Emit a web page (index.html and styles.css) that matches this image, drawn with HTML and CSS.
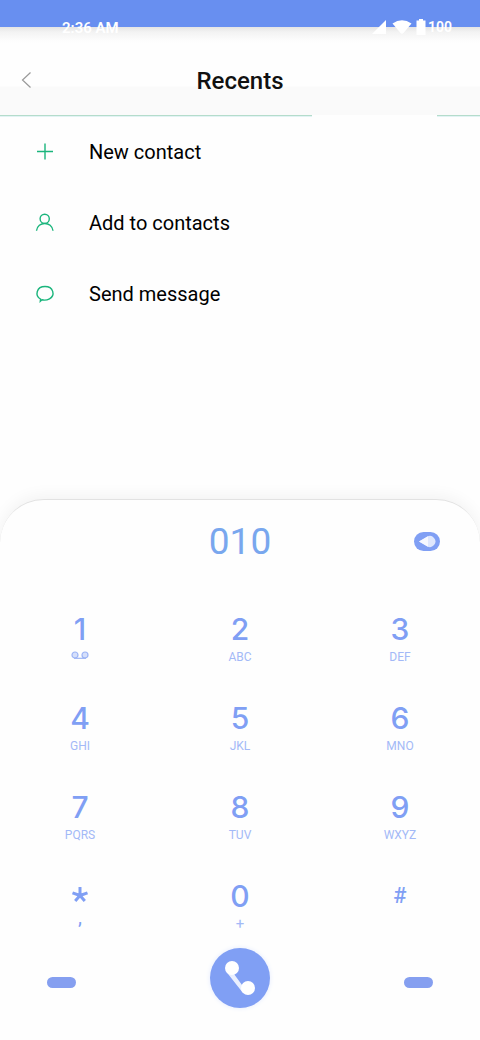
FILE: index.html
```html
<!DOCTYPE html>
<html lang="en">
<head>
<meta charset="utf-8">
<meta name="viewport" content="width=device-width, initial-scale=1">
<title>Recents</title>
<link rel="stylesheet" href="styles.css">
</head>
<body>
<div class="phone">
  <div class="status">
    <span class="time">2:36 AM</span>
    <span class="indicators">
      <svg class="signal" width="16" height="15" viewBox="0 0 16 15"><path d="M16 0v14H2z"/></svg>
      <svg class="wifi" width="20" height="16" viewBox="0 0 20 16"><path d="M.5 4.500Q10-2 19.500 4.500L11.500 14Q10 15.500 8.500 14z"/></svg>
      <svg class="battery" width="10" height="17" viewBox="0 0 10 17"><path d="M3 0h4v1.500h2.500V16h-9V1.500H3z"/></svg>
      <span class="level">100</span>
    </span>
  </div>
  <header class="header">
    <button class="back" aria-label="Back"><svg width="12" height="18" viewBox="0 0 12 18"><path d="M10.500 1.500L2.500 9l8 7.500"/></svg></button>
    <h1>Recents</h1>
  </header>
  <div class="rule"><span class="rule-long"></span><span class="rule-short"></span></div>
  <nav class="actions">
    <button><svg width="20" height="20" viewBox="0 0 20 20"><path d="M10 1.500v16M2 9.500h16"/></svg><span>New contact</span></button>
    <button><svg width="20" height="20" viewBox="0 0 20 20"><circle cx="9.700" cy="5.800" r="4.600"/><path d="M1.500 17.800c1-9.800 15.500-9.800 16.500 0"/></svg><span>Add to contacts</span></button>
    <button><svg width="20" height="20" viewBox="0 0 20 20"><path d="M5.500 15C-.5 11.500 1.500 2.500 10 2.500s10.500 9 4.500 12.300c-2.500 1.400-5.500 1.500-7.500 1L5.300 17.300z"/></svg><span>Send message</span></button>
  </nav>
  <main class="dialer">
    <div class="display">
      <output class="number">010</output>
      <button class="erase" aria-label="Delete digit"><svg width="26" height="19" viewBox="0 0 26 19"><rect width="26" height="19" rx="9.500" fill="#809ff4"/><path d="M5 9.500L13 4.800a5.500 5.500 0 1 1 0 9.400z" fill="#dfe7fd"/><path d="M5 9.500L14 4.300v10.400z" fill="#f6f8ff"/></svg></button>
    </div>
    <div class="keys">
      <button><b>1</b><svg width="18" height="9" viewBox="0 0 18 9"><g fill="#d5dffb" stroke="#9cb4f5" stroke-width="1.200"><circle cx="4" cy="4" r="3"/><circle cx="14" cy="4" r="3"/><path d="M3 7.300h12"/></g></svg></button>
      <button><b>2</b><small>ABC</small></button>
      <button><b>3</b><small>DEF</small></button>
      <button><b>4</b><small>GHI</small></button>
      <button><b>5</b><small>JKL</small></button>
      <button><b>6</b><small>MNO</small></button>
      <button><b>7</b><small>PQRS</small></button>
      <button><b>8</b><small>TUV</small></button>
      <button><b>9</b><small>WXYZ</small></button>
      <button aria-label="Star"><svg class="star" width="18" height="30" viewBox="0 0 18 30"><path d="M9 14.500V6M9 14.500l-7.500-2.700M9 14.500l7.500-2.700M9 14.500l-4.800 5.500M9 14.500l4.800 5.500"/></svg><small class="comma">,</small></button>
      <button><b>0</b><small class="plus">+</small></button>
      <button><b class="hash">#</b></button>
    </div>
    <div class="bottom">
      <button class="pill" aria-label="Menu"></button>
      <button class="call" aria-label="Call"><svg width="60" height="60" viewBox="0 0 60 60"><path d="M16.500 24L33 45l5-5-6-3-8-11z" fill="#e9effe"/><circle cx="22" cy="20" r="7"/><circle cx="38" cy="40" r="7"/></svg></button>
      <button class="pill" aria-label="Hide keypad"></button>
    </div>
  </main>
</div>
</body>
</html>
```
FILE: styles.css
```css
* { box-sizing: border-box; }
body { margin: 0; background: #fefefe; font-family: Roboto, sans-serif; }
button { border: 0; padding: 0; background: none; font-family: inherit; color: inherit; }
svg { display: block; }
.phone { min-height: 100vh; display: flex; flex-direction: column; }
.status {
  height: 44px; padding: 18px 28px 0 62px;
  display: flex; justify-content: space-between; align-items: flex-start;
  background: linear-gradient(#688ff0 27px, #e4e4e4 27px, #f3f3f3 32px, #fcfcfc 40px, #fefefe);
  color: #fff; font-size: 15px; line-height: 20px; font-weight: 600;
}
.indicators { display: flex; align-items: flex-start; gap: 4px; fill: #fff; }
.signal { margin: 2px 2px 0 0; }
.wifi { margin-top: 1px; }
.battery { margin-top: 1px; }
.level { font-size: 14px; line-height: 18px; font-weight: 600; margin-left: -2px; }
.header {
  height: 71px; padding: 0 20px;
  display: grid; grid-template-columns: 40px 1fr 40px; align-items: center;
  background: linear-gradient(#fefefe 42px, #fafafa 43px);
}
.back { width: 12px; height: 18px; fill: none; stroke: #999; stroke-width: 1.2; }
h1 { margin: 0; padding-top: 3px; text-align: center; font-size: 24px; line-height: 28px; font-weight: 500; color: #111; }
.rule { display: flex; justify-content: space-between; height: 1px; }
.rule span { background: #b4dccb; box-shadow: 0 1px #e2f3f4; }
.rule-long { width: 65%; }
.rule-short { width: 9%; }
.actions { display: flex; flex-direction: column; }
.actions button {
  display: flex; align-items: center; gap: 34px; height: 71px; padding-left: 35px;
  font-size: 20px; line-height: 24px; color: #000; text-align: left;
}
.actions svg { fill: none; stroke: #1ab57c; stroke-width: 1.4; }
.dialer {
  margin-top: auto; padding-top: 20px; border-top: 1px solid #e2e2e2;
  border-radius: 44px 44px 0 0; box-shadow: 0 -3px 16px rgba(0,0,0,.05);
  background: #fefefe; color: #809ff4;
}
.display { display: grid; grid-template-columns: 1fr auto 1fr; align-items: center; height: 44px; padding: 0 40px; }
.number { grid-column: 2; font-size: 37px; line-height: 44px; color: #79a7ee; }
.erase { justify-self: end; width: 26px; height: 19px; margin-bottom: 2px; }
.keys { display: grid; grid-template: repeat(3, 89px) 67px / repeat(3, 1fr); padding-top: 50px; }
.keys button { display: flex; flex-direction: column; align-items: center; }
.keys b { font-family: Inter, sans-serif; font-weight: 500; font-size: 30px; line-height: 30px; }
.keys small { margin-top: 6px; font-size: 12px; line-height: 14px; color: #a3b9f7; }
.keys b + svg { margin-top: 7px; }
.keys .star { stroke: #809ff4; stroke-width: 3; fill: none; }
.keys .comma { margin-top: 0; font-size: 20px; line-height: 12px; color: #809ff4; }
.keys .plus { font-size: 15px; }
.keys .hash { font-family: Roboto, sans-serif; font-size: 22px; }
.bottom { display: flex; justify-content: space-between; align-items: center; padding: 0 47px 32px; }
.pill { width: 29px; height: 11px; margin-top: 8px; border-radius: 6px; background: #859ff0; }
.call { width: 60px; height: 60px; border-radius: 50%; background: #809ff4; fill: #fff; box-shadow: 0 0 5px #e4ebff; }
```
